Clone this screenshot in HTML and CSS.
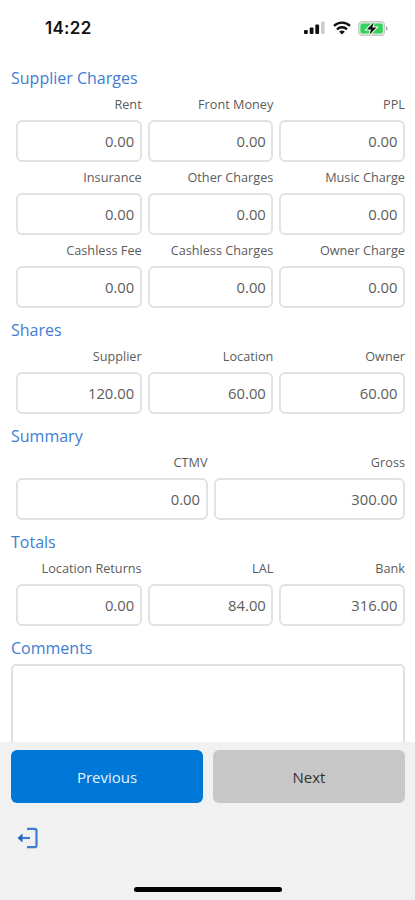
FILE: index.html
```html
<!DOCTYPE html>
<html lang="en">
<head>
<meta charset="utf-8">
<title>Collection</title>
<link rel="stylesheet" href="styles.css">
</head>
<body>
<header class="status">
  <span class="clock">14:22</span>
  <div class="indicators">
    <svg class="signal" width="21" height="14" viewBox="0 0 21 14"><rect x="0" y="9" width="3.8" height="4" rx="1"/><rect x="5.7" y="6.5" width="3.8" height="6.5" rx="1"/><rect x="11.3" y="3.5" width="3.8" height="9.5" rx="1"/><rect class="faint" x="17" y="0.5" width="3.6" height="12.5" rx="1"/></svg>
    <svg class="wifi" width="18" height="14" viewBox="0 0 18 14"><path d="M1 4.9a11.5 11.5 0 0 1 16 0M4 8.3a7.3 7.3 0 0 1 10 0" fill="none" stroke="#111" stroke-width="2.4"/><path d="M9 13.4 6.2 10.7a4.2 4.2 0 0 1 5.6 0z"/></svg>
    <svg class="battery" width="30" height="15" viewBox="0 0 30 15"><rect x=".6" y=".6" width="26" height="13.8" rx="4" fill="#dfe8e0" stroke="#c4ccc5" stroke-width="1.2"/><rect x="2.4" y="2.4" width="22.4" height="10.2" rx="2.3" fill="#34d45c"/><path d="M28 5v5q1.6-.8 1.6-2.5T28 5" fill="#aaa"/><path d="M15.8 1.2 8.8 8.4h4.2l-1.5 5.4 7-7.2h-4.2z" fill="#111" stroke="#fff" stroke-width="2" paint-order="stroke"/></svg>
  </div>
</header>
<main class="form">
  <h2>Supplier Charges</h2>
  <div class="fields">
    <div class="field"><span class="label">Rent</span><div class="value">0.00</div></div>
    <div class="field"><span class="label">Front Money</span><div class="value">0.00</div></div>
    <div class="field"><span class="label">PPL</span><div class="value">0.00</div></div>
    <div class="field"><span class="label">Insurance</span><div class="value">0.00</div></div>
    <div class="field"><span class="label">Other Charges</span><div class="value">0.00</div></div>
    <div class="field"><span class="label">Music Charge</span><div class="value">0.00</div></div>
    <div class="field"><span class="label">Cashless Fee</span><div class="value">0.00</div></div>
    <div class="field"><span class="label">Cashless Charges</span><div class="value">0.00</div></div>
    <div class="field"><span class="label">Owner Charge</span><div class="value">0.00</div></div>
  </div>
  <h2>Shares</h2>
  <div class="fields">
    <div class="field"><span class="label">Supplier</span><div class="value">120.00</div></div>
    <div class="field"><span class="label">Location</span><div class="value">60.00</div></div>
    <div class="field"><span class="label">Owner</span><div class="value">60.00</div></div>
  </div>
  <h2>Summary</h2>
  <div class="fields two">
    <div class="field"><span class="label">CTMV</span><div class="value">0.00</div></div>
    <div class="field"><span class="label">Gross</span><div class="value">300.00</div></div>
  </div>
  <h2>Totals</h2>
  <div class="fields">
    <div class="field"><span class="label">Location Returns</span><div class="value">0.00</div></div>
    <div class="field"><span class="label">LAL</span><div class="value">84.00</div></div>
    <div class="field"><span class="label">Bank</span><div class="value">316.00</div></div>
  </div>
  <h2>Comments</h2>
  <div class="comments"></div>
</main>
<footer class="footer">
  <div class="buttons">
    <button class="btn primary">Previous</button>
    <button class="btn">Next</button>
  </div>
  <svg class="exit" width="22" height="22" viewBox="0 0 22 22"><path d="M10 1.8h7.5q2 0 2 2v14.4q0 2-2 2H10" fill="none" stroke="#3c7bd0" stroke-width="2.2"/><path d="M4 11h9" stroke="#3c7bd0" stroke-width="2.2"/><path d="M.5 11 5.5 6.6v8.8z" fill="#1c68c8"/></svg>
  <div class="home"></div>
</footer>
</body>
</html>
```
FILE: styles.css
```css
* { box-sizing: border-box; }
body {
  margin: 0;
  height: 900px;
  display: flex;
  flex-direction: column;
  overflow: hidden;
  background: #fff;
  color: #5c5c5c;
  font-family: "Open Sans", "Noto Sans", sans-serif;
}
.status {
  height: 56px;
  flex: none;
  display: flex;
  justify-content: space-between;
  padding: 0 27px 0 45px;
}
.clock {
  font: 600 17px/56px Inter, sans-serif;
  color: #111;
  letter-spacing: .3px;
}
.indicators { display: flex; align-items: center; gap: 7.5px; height: 56px; fill: #111; }
.faint { fill: #ccc; }
.form { flex: 1; min-height: 0; overflow: hidden; padding: 0 10px 0 11px; }
h2 {
  margin: 0;
  height: 33px;
  padding-top: 11px;
  font-size: 16px;
  line-height: 22px;
  font-weight: 400;
  color: #3f7dd2;
}
.fields {
  display: grid;
  grid-template-columns: repeat(3, 1fr);
  column-gap: 6px;
  padding-left: 5px;
}
.two { grid-template-columns: repeat(2, 1fr); }
.label {
  display: block;
  height: 31px;
  font-size: 12.7px;
  line-height: 30px;
  text-align: right;
  white-space: nowrap;
}
.value {
  height: 42px;
  border: 2px solid #e2e2e2;
  border-radius: 6px;
  padding-right: 5.5px;
  font-size: 14.8px;
  line-height: 38px;
  text-align: right;
}
.comments {
  margin-top: 5px;
  height: 120px;
  border: 2px solid #e0e2e0;
  border-radius: 5px;
}
.footer {
  flex: none;
  height: 158px;
  display: flex;
  flex-direction: column;
  align-items: flex-start;
  background: #f1f1f1;
  padding: 8px 10px 8px 11px;
}
.buttons { align-self: stretch; display: grid; grid-template-columns: 1fr 1fr; gap: 10px; }
.btn {
  height: 53px;
  border: 0;
  border-radius: 6px;
  background: #c7c7c7;
  color: #333;
  font: 15px "Open Sans", sans-serif;
}
.primary { background: #0078d7; color: #e8f2ff; }
.exit { margin: 24px 0 0 6px; }
.home { align-self: center; margin-top: auto; width: 148px; height: 5px; border-radius: 3px; background: #000; }
```
